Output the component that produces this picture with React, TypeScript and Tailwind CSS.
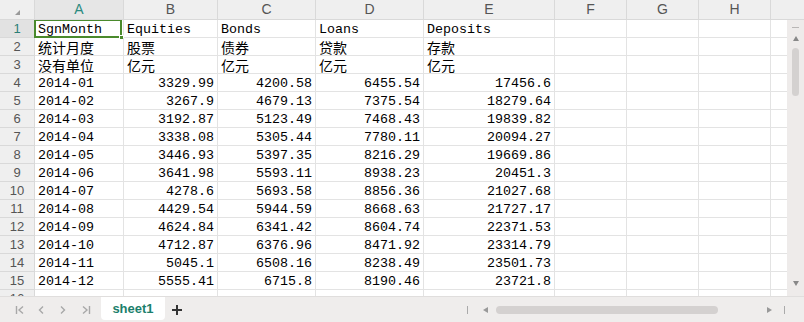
import React from "react";

const cols = ["A", "B", "C", "D", "E", "F", "G", "H"];
const widths = ["w-[89px]", "w-[94px]", "w-[98px]", "w-[108px]", "w-[131px]", "w-[72px]", "w-[72px]", "w-[72px]"];

const data: string[][] = [
  ["2014-01", "3329.99", "4200.58", "6455.54", "17456.6"],
  ["2014-02", "3267.9", "4679.13", "7375.54", "18279.64"],
  ["2014-03", "3192.87", "5123.49", "7468.43", "19839.82"],
  ["2014-04", "3338.08", "5305.44", "7780.11", "20094.27"],
  ["2014-05", "3446.93", "5397.35", "8216.29", "19669.86"],
  ["2014-06", "3641.98", "5593.11", "8938.23", "20451.3"],
  ["2014-07", "4278.6", "5693.58", "8856.36", "21027.68"],
  ["2014-08", "4429.54", "5944.59", "8668.63", "21727.17"],
  ["2014-09", "4624.84", "6341.42", "8604.74", "22371.53"],
  ["2014-10", "4712.87", "6376.96", "8471.92", "23314.79"],
  ["2014-11", "5045.1", "6508.16", "8238.49", "23501.73"],
  ["2014-12", "5555.41", "6715.8", "8190.46", "23721.8"],
];

const textRows: string[][] = [
  ["SgnMonth", "Equities", "Bonds", "Loans", "Deposits"],
  ["统计月度", "股票", "债券", "贷款", "存款"],
  ["没有单位", "亿元", "亿元", "亿元", "亿元"],
];

const mono = "font-['Liberation_Mono','Noto_Sans_CJK_SC',monospace] text-[13.33px]";
const cjk = "font-['Noto_Sans_CJK_SC',sans-serif] text-[14px]";
const sans = "font-['Liberation_Sans',Arial,sans-serif]";

function Row({ n, cells, align, isCjk }: { n: number; cells: string[]; align: "left" | "right"; isCjk?: boolean }) {
  return (
    <div className="flex h-[18px] shrink-0">
      <div
        className={`w-[35px] shrink-0 border-r border-b border-[#d9d9d9] flex items-center justify-center text-[13px] leading-[17px] ${sans} ${
          n === 1 ? "bg-[#e2e2e2] text-[#2a7f76]" : "bg-[#efefef] text-[#555]"
        }`}
      >
        {n}
      </div>
      {widths.map((w, i) => {
        const v = cells[i] ?? "";
        const right = align === "right" && i > 0;
        return (
          <div
            key={i}
            className={`${w} shrink-0 relative border-r border-b border-[#e3e3e3] flex items-center whitespace-nowrap text-black ${
              right ? "justify-end pr-[3px]" : "pl-[3px]"
            } ${isCjk ? cjk : mono}`}
          >
            <span className={`block leading-[15px] ${isCjk ? "pt-[1px]" : "pt-[2px]"}`}>{v}</span>
            {n === 1 && i === 0 && (
              <>
                <div className="absolute left-[-1px] top-[-1px] right-[1px] bottom-[-1px] border-2 border-[#4a8a2c] pointer-events-none" />
                <div className="absolute right-[-1px] bottom-[-3px] w-[5px] h-[5px] bg-[#4a8a2c] border border-white" />
              </>
            )}
          </div>
        );
      })}
      <div className="flex-1 border-b border-[#e3e3e3]" />
    </div>
  );
}

export default function App() {
  return (
    <div className="w-[804px] h-[322px] flex flex-col bg-white overflow-hidden select-none">
      {/* column header */}
      <div className="flex h-[20px] shrink-0 bg-[#efefef]">
        <div className="w-[35px] shrink-0 border-r border-b border-[#d9d9d9] relative">
          <div className="absolute left-[15px] top-[10px] w-0 h-0 border-l-[5px] border-l-transparent border-b-[5px] border-b-[#9a9a9a]" />
        </div>
        {cols.map((c, i) => (
          <div
            key={c}
            className={`${widths[i]} shrink-0 border-r border-b border-[#d9d9d9] flex items-center justify-center text-[14px] ${sans} ${
              i === 0 ? "text-[#2a8a80] bg-[#e6e6e6]" : "text-[#555]"
            }`}
          >
            {c}
          </div>
        ))}
        <div className="flex-1 border-b border-[#d9d9d9]" />
      </div>

      {/* body */}
      <div className="flex flex-1 min-h-0">
        <div className="flex-1 flex flex-col overflow-hidden">
          {textRows.map((r, idx) => (
            <Row key={idx} n={idx + 1} cells={r} align="left" isCjk={idx > 0} />
          ))}
          {data.map((r, idx) => (
            <Row key={idx} n={idx + 4} cells={r} align="right" />
          ))}
          <Row n={16} cells={[]} align="left" />
        </div>
        {/* vertical scrollbar */}
        <div className="w-[17px] shrink-0 bg-[#eeebea] flex flex-col items-center relative">
          <div className="mt-[7px] w-[7px] h-[1px] bg-[#b9b6b5]" />
          <div className="mt-[8px] w-0 h-0 border-l-[3.5px] border-r-[3.5px] border-l-transparent border-r-transparent border-b-[5px] border-b-[#888]" />
          <div className="mt-[7px] w-[7px] h-[48px] rounded-full bg-[#d4d1d0]" />
          <div className="flex-1" />
          <div className="mb-[10px] w-0 h-0 border-l-[3.5px] border-r-[3.5px] border-l-transparent border-r-transparent border-t-[5px] border-t-[#888]" />
        </div>
      </div>

      {/* tab bar */}
      <div className="h-[26px] shrink-0 bg-[#efedec] flex items-stretch border-t border-[#e0dedd]">
        <div className="flex items-center">
          <svg className="ml-[15px]" width="10" height="12" viewBox="0 0 10 12">
            <path d="M1.5 2v8M8 2.5L4 6l4 3.5" stroke="#a8a8a8" strokeWidth="1.4" fill="none" />
          </svg>
          <svg className="ml-[12px]" width="8" height="12" viewBox="0 0 8 12">
            <path d="M6 2.5L2.5 6 6 9.5" stroke="#a8a8a8" strokeWidth="1.4" fill="none" />
          </svg>
          <svg className="ml-[14px]" width="8" height="12" viewBox="0 0 8 12">
            <path d="M2 2.5L5.5 6 2 9.5" stroke="#a8a8a8" strokeWidth="1.4" fill="none" />
          </svg>
          <svg className="ml-[14px]" width="10" height="12" viewBox="0 0 10 12">
            <path d="M2 2.5L6 6 2 9.5M8.5 2v8" stroke="#a8a8a8" strokeWidth="1.4" fill="none" />
          </svg>
        </div>
        <div className="ml-[10px] w-[64px] mb-[2px] bg-white rounded-b-[4px] flex items-center justify-center">
          <span className={`text-[13px] font-bold text-[#1b7f6c] ${sans}`}>sheet1</span>
        </div>
        <div className="ml-[6px] flex items-center">
          <svg width="12" height="12" viewBox="0 0 12 12">
            <path d="M6 1v10M1 6h10" stroke="#333" strokeWidth="2" />
          </svg>
        </div>
        <div className="flex-1" />
        <div className="flex items-center">
          <div className="w-[1px] h-[8px] bg-[#aaa]" />
          <div className="ml-[15px] w-0 h-0 border-t-[3px] border-b-[3px] border-t-transparent border-b-transparent border-r-[5px] border-r-[#999]" />
          <div className="ml-[8px] w-[222px] h-[8px] rounded-full bg-[#d4d1d0]" />
          <div className="ml-[49px] w-0 h-0 border-t-[3px] border-b-[3px] border-t-transparent border-b-transparent border-l-[5px] border-l-[#999]" />
          <div className="ml-[12px] mr-[19px] w-[1px] h-[8px] bg-[#aaa]" />
        </div>
      </div>
    </div>
  );
}
